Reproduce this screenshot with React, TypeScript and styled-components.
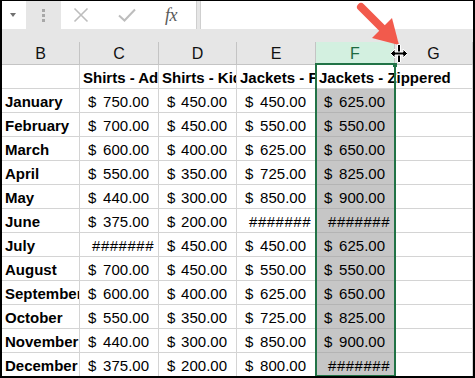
import { Fragment } from 'react';
import styled, { createGlobalStyle } from 'styled-components';

const GlobalStyle = createGlobalStyle`
  html, body {
    margin: 0;
    padding: 0;
    background: #ffffff;
  }
  body {
    font-family: "Liberation Sans", Arial, sans-serif;
  }
`;

const COLUMNS = '78px 79px 78px 79px 79px 1fr';
const GREEN = '#217346';

const Frame = styled.div`
  position: relative;
  width: 475px;
  height: 378px;
  box-sizing: border-box;
  border: 2px solid #000;
  border-top-width: 1px;
  background: #e6e6e6;
  overflow: hidden;
  display: flex;
  flex-direction: column;
`;

const Toolbar = styled.div`
  display: flex;
  height: 28px;
  flex-shrink: 0;
`;

const NameBox = styled.div`
  width: 24px;
  background: #fff;
  display: flex;
  align-items: center;
  justify-content: center;
  padding-right: 8px;
  box-sizing: border-box;
`;

const DropArrow = styled.div`
  width: 0;
  height: 0;
  border-left: 3.5px solid transparent;
  border-right: 3.5px solid transparent;
  border-top: 4px solid #707070;
  margin-left: 6px;
`;

const Grip = styled.div`
  width: 35px;
  display: flex;
  flex-direction: column;
  align-items: center;
  justify-content: center;
  gap: 2px;
`;

const GripDot = styled.span`
  width: 3px;
  height: 3px;
  background: #a8a8a8;
`;

const ButtonBox = styled.div`
  width: 136px;
  background: #fff;
  border-right: 1px solid #cfcfcf;
  box-sizing: border-box;
  display: flex;
  align-items: center;
  padding-left: 11px;
  gap: 28px;
`;

const ToolIcon = styled.div`
  width: 18px;
  height: 18px;
  display: flex;
  align-items: center;
  justify-content: center;
`;

const Fx = styled.span`
  font-family: "Liberation Serif", "Times New Roman", serif;
  font-style: italic;
  font-size: 18px;
  color: #5a5a5a;
  margin-left: -4px;
  letter-spacing: -0.5px;
`;

const FormulaInput = styled.div`
  flex: 1;
  margin-left: 3px;
  background: #fff;
  border-left: 1px solid #cfcfcf;
`;

const Strip = styled.div`
  height: 13px;
  flex-shrink: 0;
`;

const HeaderRow = styled.div`
  display: grid;
  grid-template-columns: ${COLUMNS};
  height: 23px;
  flex-shrink: 0;
`;

const ColHeader = styled.div<{ $active?: boolean }>`
  box-sizing: border-box;
  border-right: 1px solid #c4c4c4;
  border-bottom: 1px solid #c4c4c4;
  background: ${p => (p.$active ? '#d3f0e0' : '#e6e6e6')};
  color: ${p => (p.$active ? '#1d6a40' : '#111')};
  font-size: 16px;
  display: flex;
  align-items: center;
  justify-content: center;
  padding-top: 2px;
`;

const SheetArea = styled.div`
  position: relative;
  flex: 1;
  background: #fff;
`;

const Sheet = styled.div`
  display: grid;
  grid-template-columns: ${COLUMNS};
  grid-auto-rows: 24px;
`;

const Cell = styled.div<{ $shaded?: boolean; $overflow?: boolean }>`
  box-sizing: border-box;
  border-right: 1px solid ${p => (p.$shaded ? '#b4b4b4' : '#d4d4d4')};
  border-bottom: 1px solid ${p => (p.$shaded ? '#b4b4b4' : '#d4d4d4')};
  background: ${p => (p.$shaded ? '#c6c6c6' : 'transparent')};
  font-size: 15px;
  color: #000;
  display: flex;
  align-items: flex-end;
  padding-bottom: 2px;
  white-space: nowrap;
  overflow: ${p => (p.$overflow ? 'visible' : 'hidden')};
  position: relative;
  z-index: ${p => (p.$overflow ? 1 : 0)};
`;

const LabelCell = styled(Cell)`
  font-weight: bold;
  padding-left: 3px;
`;

const MoneyCell = styled(Cell)`
  justify-content: space-between;
  padding-left: 8px;
  padding-right: 9px;
`;

const HashCell = styled(Cell)`
  justify-content: flex-end;
  padding-right: 4px;
  letter-spacing: 0.5px;
`;

const Selection = styled.div`
  position: absolute;
  left: 313px;
  top: -2px;
  width: 81px;
  bottom: 0;
  box-sizing: border-box;
  border: 2px solid ${GREEN};
  pointer-events: none;
  z-index: 2;
`;

const Handle = styled.div`
  position: absolute;
  right: -3px;
  top: -2px;
  width: 4px;
  height: 4px;
  background: ${GREEN};
`;

const Annotation = styled.svg`
  position: absolute;
  left: 350px;
  top: -1px;
  z-index: 3;
  pointer-events: none;
`;

type Value = number | null;

const rows: { month: string; values: Value[] }[] = [
  { month: 'January', values: [750, 450, 450, 625] },
  { month: 'February', values: [700, 450, 550, 550] },
  { month: 'March', values: [600, 400, 625, 650] },
  { month: 'April', values: [550, 350, 725, 825] },
  { month: 'May', values: [440, 300, 850, 900] },
  { month: 'June', values: [375, 200, null, null] },
  { month: 'July', values: [null, 450, 450, 625] },
  { month: 'August', values: [700, 450, 550, 550] },
  { month: 'September', values: [600, 400, 625, 650] },
  { month: 'October', values: [550, 350, 725, 825] },
  { month: 'November', values: [440, 300, 850, 900] },
  { month: 'December', values: [375, 200, 800, null] },
];

const titles = ['Shirts - Adult', 'Shirts - Kids', 'Jackets - Fleece', 'Jackets - Zippered'];

function ValueCell({ value, shaded }: { value: Value; shaded: boolean }) {
  if (value === null) {
    return <HashCell $shaded={shaded}>#######</HashCell>;
  }
  return (
    <MoneyCell $shaded={shaded}>
      <span>$</span>
      <span>{value.toFixed(2)}</span>
    </MoneyCell>
  );
}

export default function App() {
  return (
    <>
      <GlobalStyle />
      <Frame>
        <Toolbar>
          <NameBox>
            <DropArrow />
          </NameBox>
          <Grip>
            <GripDot />
            <GripDot />
            <GripDot />
          </Grip>
          <ButtonBox>
            <ToolIcon>
              <svg width="16" height="16" viewBox="0 0 16 16">
                <path d="M1.5 1.5 L14.5 14.5 M14.5 1.5 L1.5 14.5" stroke="#bdbdbd" strokeWidth="1.6" fill="none" />
              </svg>
            </ToolIcon>
            <ToolIcon>
              <svg width="18" height="14" viewBox="0 0 18 14">
                <path d="M1 7.5 L6.5 12.5 L17 1.5" stroke="#bdbdbd" strokeWidth="2" fill="none" />
              </svg>
            </ToolIcon>
            <ToolIcon>
              <Fx>fx</Fx>
            </ToolIcon>
          </ButtonBox>
          <FormulaInput />
        </Toolbar>
        <Strip />
        <HeaderRow>
          {['B', 'C', 'D', 'E', 'F', 'G'].map(l => (
            <ColHeader key={l} $active={l === 'F'}>
              {l}
            </ColHeader>
          ))}
        </HeaderRow>
        <SheetArea>
          <Sheet>
            <LabelCell />
            {titles.map((t, i) => (
              <LabelCell key={t} $overflow={i === 3}>
                {t}
              </LabelCell>
            ))}
            <Cell />
            {rows.map(r => (
              <Fragment key={r.month}>
                <LabelCell>{r.month}</LabelCell>
                {r.values.map((v, i) => (
                  <ValueCell key={i} value={v} shaded={i === 3} />
                ))}
                <Cell />
              </Fragment>
            ))}
          </Sheet>
          <Selection>
            <Handle />
          </Selection>
        </SheetArea>
        <Annotation width="65" height="66" viewBox="0 0 65 66">
          {/* red pointer arrow */}
          <line x1="9" y1="7" x2="30" y2="28" stroke="#f25a4c" strokeWidth="8" strokeLinecap="round" />
          <polygon points="47,45 40,18 20,38" fill="#f25a4c" />
          {/* column resize cursor */}
          <g stroke="#fff" strokeWidth="1" strokeLinejoin="round">
            <rect x="45.5" y="44.5" width="3" height="18" fill="#000" />
            <path d="M38.5 53.5 L43 49 L43 52 L51 52 L51 49 L55.5 53.5 L51 58 L51 55 L43 55 L43 58 Z" fill="#000" />
          </g>
        </Annotation>
      </Frame>
    </>
  );
}
